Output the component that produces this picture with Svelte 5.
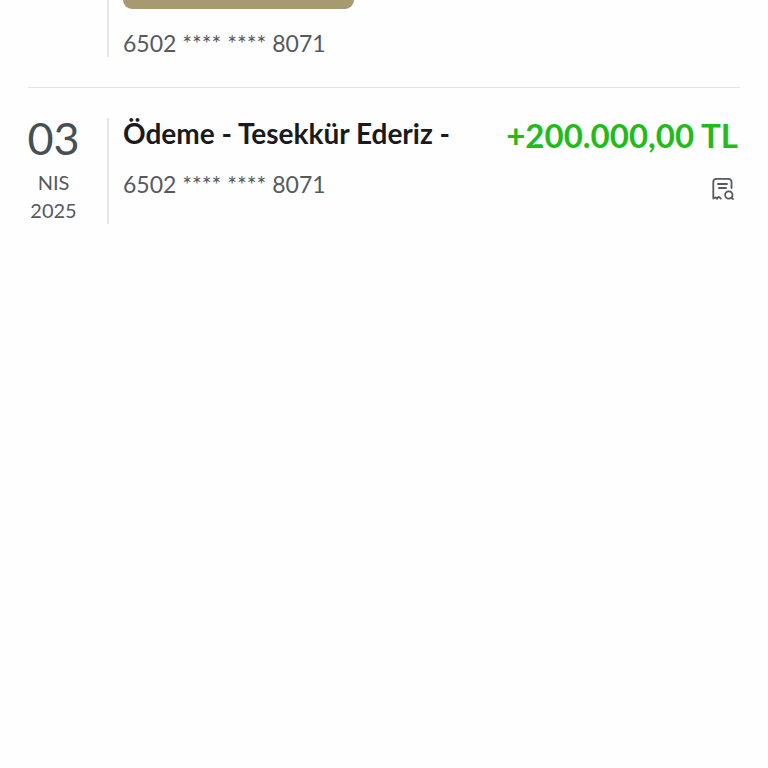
<script lang="ts">
    interface Transaction {
        day: string;
        month: string;
        year: string;
        title: string;
        card: string;
        amount: string;
    }

    const cardNumber = "6502 **** **** 8071";

    const transactions: Transaction[] = [
        {
            day: "03",
            month: "NIS",
            year: "2025",
            title: "Ödeme - Tesekkür Ederiz -",
            card: cardNumber,
            amount: "+200.000,00 TL",
        },
    ];
</script>

<main class="statement">
    <!-- tail of the previous row -->
    <section class="row previous">
        <div class="date"></div>
        <div class="details">
            <div class="chip"></div>
            <p class="card">{cardNumber}</p>
        </div>
    </section>

    {#each transactions as item}
        <section class="row">
            <div class="date">
                <span class="day">{item.day}</span>
                <span class="month">{item.month}</span>
                <span class="year">{item.year}</span>
            </div>
            <div class="details">
                <h2 class="title">{item.title}</h2>
                <p class="card">{item.card}</p>
            </div>
            <div class="side">
                <span class="amount">{item.amount}</span>
                <button class="receipt" aria-label="Dekont">
                    <svg
                        viewBox="0 0 24 24"
                        fill="none"
                        stroke="currentColor"
                        stroke-width="1.8"
                        stroke-linecap="round"
                        stroke-linejoin="round"
                        width="24"
                        height="24"
                    >
                        <path
                            d="M20.500 11V4.800a3 3 0 0 0-3-3H5.300a3 3 0 0 0-3 3V21.500l2.200-1.200 1.600 1.500q.8-2.300 2.300-1.700l1.400 1.500"
                        />
                        <path d="M7 7h9M8 11h7" />
                        <circle cx="17.800" cy="18" r="3.700" />
                        <path d="M20.500 20.700l1.500 1.300" />
                    </svg>
                </button>
            </div>
        </section>
    {/each}
</main>

<style>
    :global(body) {
        margin: 0;
        background: #fefefe;
    }

    .statement {
        padding: 0 28px;
        font-family: Lato, "Open Sans", sans-serif;
        color: #555a5e;
    }

    .row {
        display: flex;
        padding: 30px 0;
    }

    .previous {
        padding-top: 0;
        border-bottom: 1px solid #e4e4e5;
    }

    .date {
        display: flex;
        flex-direction: column;
        align-items: center;
        flex: none;
        width: 51px;
        padding-right: 28px;
        border-right: 2px solid #e6e6e7;
        font-size: 20px;
        line-height: 28px;
    }

    .day {
        margin-bottom: 10px;
        font-size: 45px;
        font-weight: 400;
        line-height: 40px;
        color: #465054;
    }

    .details {
        flex: 1;
        min-width: 0;
        padding-left: 14px;
    }

    .chip {
        width: 231px;
        height: 9px;
        margin-bottom: 20px;
        border-radius: 0 0 10px 10px;
        background: #a79a70;
    }

    .title {
        margin: 0 0 22px;
        font-size: 28px;
        font-weight: 700;
        line-height: 30px;
        color: #1a1a1c;
    }

    .card {
        margin: 0;
        font-size: 23px;
        font-weight: 400;
        line-height: 28px;
    }

    .side {
        display: flex;
        flex-direction: column;
        align-items: flex-end;
    }

    .amount {
        padding-right: 2px;
        font-size: 33px;
        font-weight: 700;
        line-height: 34px;
        color: #22bb1a;
        white-space: nowrap;
    }

    .receipt {
        display: flex;
        margin: 25px 5px 0 0;
        padding: 0;
        border: none;
        background: none;
        color: #55595d;
        cursor: pointer;
    }
</style>
